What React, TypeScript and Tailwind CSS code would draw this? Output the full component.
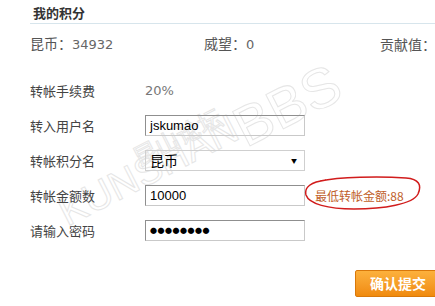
const cjk = "font-['Noto_Sans_CJK_SC','Microsoft_YaHei',sans-serif]"

function Row({ label, children }: { label: string; children: React.ReactNode }) {
  return (
    <div className="flex h-[35px] items-center">
      <span className="w-[115px] shrink-0 text-[13px] text-[#444]">{label}</span>
      {children}
    </div>
  )
}

function Field({ children }: { children: React.ReactNode }) {
  return (
    <div className="flex h-[21px] w-[160px] shrink-0 items-center border border-[#c9c9c9] border-l-[#8f8f8f] border-t-[#8f8f8f] pl-[4px] text-[13px] text-black">
      {children}
    </div>
  )
}

export default function App() {
  return (
    <div className={`relative h-[306px] w-[435px] overflow-hidden bg-white ${cjk}`}>
      {/* watermark, behind the form */}
      <div className="pointer-events-none absolute left-[70px] top-[192px] origin-bottom-left -rotate-[27deg] whitespace-nowrap font-['Liberation_Sans',sans-serif] text-[40px] leading-none text-transparent [-webkit-text-stroke:1px_#e6e6e6]">
        KUNSHAN
      </div>
      <div className="pointer-events-none absolute left-[250px] top-[100px] origin-bottom-left -rotate-[27deg] whitespace-nowrap font-['Liberation_Sans',sans-serif] text-[56px] leading-none text-transparent [-webkit-text-stroke:1px_#e6e6e6]">
        BBS
      </div>
      <div className="pointer-events-none absolute left-[140px] top-[145px] origin-bottom-left -rotate-[27deg] whitespace-nowrap text-[24px] leading-none text-transparent [-webkit-text-stroke:1px_#e6e6e6]">
        昆山论坛
      </div>

      <div className="relative ml-[30px]">
        <div className="h-[24px] border-b border-[#d7e5ec] pl-[3px] pt-[5px] text-[13px] font-bold leading-[16px] text-[#333]">
          我的积分
        </div>
        <div className="flex h-[40px] items-center whitespace-nowrap text-[14px] text-[#555]">
          <span className="w-[174px] shrink-0">
            昆币：<span className="font-['DejaVu_Sans',sans-serif] text-[13px] text-[#666]">34932</span>
          </span>
          <span className="w-[176px] shrink-0">
            威望：<span className="font-['DejaVu_Sans',sans-serif] text-[13px] text-[#666]">0</span>
          </span>
          <span className="shrink-0">贡献值：</span>
        </div>

        <div className="mt-[9px]">
          <Row label="转帐手续费">
            <span className="font-['DejaVu_Sans',sans-serif] text-[13px] text-[#777]">20%</span>
          </Row>
          <Row label="转入用户名">
            <Field>
              <span className="font-['Liberation_Sans',sans-serif]">jskumao</span>
            </Field>
          </Row>
          <Row label="转帐积分名">
            <div className="flex h-[21px] w-[160px] shrink-0 items-center justify-between border border-[#cfcfcf] pl-[4px] pr-[7px] text-[14px] text-black">
              <span>昆币</span>
              <span className="text-[6px]">▼</span>
            </div>
          </Row>
          <Row label="转帐金额数">
            <Field>
              <span className="font-['Liberation_Sans',sans-serif]">10000</span>
            </Field>
            <div className="relative ml-[10px] whitespace-nowrap text-[12px] text-[#c0602a]">
              最低转帐金额:88
              <svg className="absolute -left-[11px] -top-[12px]" width="120" height="40" viewBox="0 0 120 40" fill="none">
                <path
                  d="M16 6 C35 2 75 1 102 3 C115 4 118 10 114 19 C109 29 80 34 50 34 C24 34 5 29 2 20 C0 12 7 7 22 5"
                  stroke="#d11c1c"
                  strokeWidth="1.5"
                />
              </svg>
            </div>
          </Row>
          <Row label="请输入密码">
            <Field>
              <span className="text-[7px] tracking-[0.5px]">●●●●●●●●</span>
            </Field>
          </Row>
        </div>
      </div>

      <div className="relative mt-[22px] flex pl-[355px]">
        <div className="flex h-[27px] w-[90px] shrink-0 items-center rounded-[2px] border border-[#d9780a] bg-gradient-to-b from-[#fcb13c] to-[#f08a0c] pl-[14px] text-[14px] font-bold text-white">
          确认提交
        </div>
      </div>
    </div>
  )
}
